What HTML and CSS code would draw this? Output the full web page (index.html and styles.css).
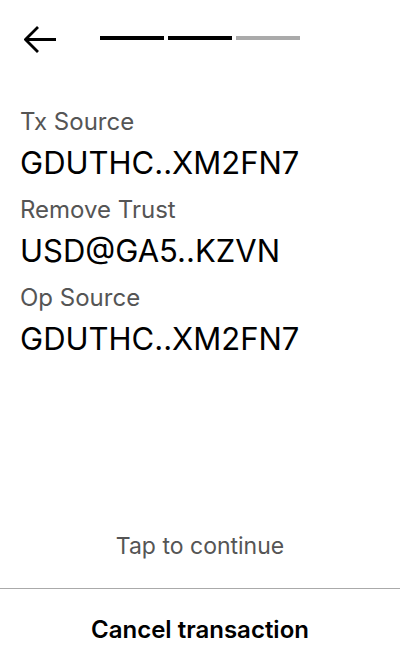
FILE: index.html
```html
<!DOCTYPE html>
<html lang="en">
<head>
<meta charset="utf-8">
<meta name="viewport" content="width=device-width, initial-scale=1">
<title>Review transaction</title>
<link rel="stylesheet" href="styles.css">
</head>
<body>
<div class="screen">
  <header class="header">
    <button class="back" type="button" aria-label="Back">
      <svg viewBox="0 0 32 32" width="32" height="32" fill="none" stroke="currentColor" aria-hidden="true">
        <path stroke-width="3" d="M3 17.500H32"/>
        <path stroke-width="2.800" d="M14 5L1.500 17.500L14 30"/>
      </svg>
    </button>
    <div class="progress" role="progressbar" aria-label="Page" aria-valuemin="1" aria-valuemax="3" aria-valuenow="2">
      <span class="step step-done"></span>
      <span class="step step-done"></span>
      <span class="step"></span>
    </div>
  </header>
  <main class="content">
    <dl class="details">
      <dt>Tx Source</dt>
      <dd>GDUTHC..XM2FN7</dd>
      <dt>Remove Trust</dt>
      <dd>USD@GA5..KZVN</dd>
      <dt>Op Source</dt>
      <dd>GDUTHC..XM2FN7</dd>
    </dl>
    <button class="continue" type="button">Tap to continue</button>
  </main>
  <footer class="footer">
    <button class="cancel" type="button">Cancel transaction</button>
  </footer>
</div>
</body>
</html>
```

FILE: styles.css
```css
* {
  box-sizing: border-box;
}

body {
  margin: 0;
  background: #fff;
  color: #000;
  font-family: Inter, "Liberation Sans", sans-serif;
}

button {
  padding: 0;
  border: 0;
  background: none;
  color: inherit;
  font: inherit;
}

.screen {
  display: flex;
  flex-direction: column;
  min-height: 100vh;
}

.header {
  display: grid;
  grid-template-columns: 1fr 2fr 1fr;
  align-items: center;
  padding: 22px 0;
}

.back {
  justify-self: start;
  margin-left: 24px;
  line-height: 0;
}

.progress {
  display: flex;
  gap: 4px;
}

.step {
  flex: 1;
  height: 4px;
  background: #aaa;
}

.step-done {
  background: #000;
}

.content {
  display: flex;
  flex: 1;
  flex-direction: column;
  justify-content: space-between;
  padding: 28px 20px 24px;
}

.details {
  margin: 0;
}

.details dt {
  color: #555;
  font-size: 24px;
  line-height: 36px;
}

.details dd {
  margin: 0 0 6px;
  font-size: 31px;
  line-height: 46px;
}

.continue {
  color: #555;
  font-size: 23px;
  line-height: 36px;
}

.footer {
  border-top: 1px solid #aaa;
}

.cancel {
  width: 100%;
  height: 83px;
  padding-bottom: 2px;
  font-size: 24px;
  font-weight: 600;
}
```
